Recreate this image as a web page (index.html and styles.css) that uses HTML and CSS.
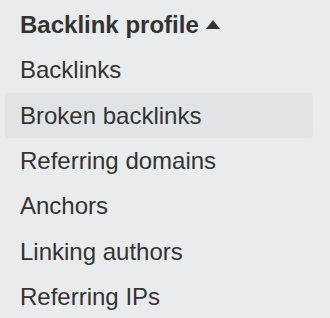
FILE: index.html
```html
<!DOCTYPE html>
<html>
<head>
<meta charset="utf-8">
<link rel="stylesheet" href="styles.css">
</head>
<body>
<nav class="menu">
  <div class="menu-title">Backlink profile<svg class="caret" width="14" height="9" viewBox="0 0 14 9"><path d="M7 0 L14 9 L0 9 Z" fill="#333"/></svg></div>
  <div class="menu-item">Backlinks</div>
  <div class="menu-item active">Broken backlinks</div>
  <div class="menu-item">Referring domains</div>
  <div class="menu-item">Anchors</div>
  <div class="menu-item">Linking authors</div>
  <div class="menu-item">Referring IPs</div>
</nav>
</body>
</html>
```

FILE: styles.css
```css
html, body {
  margin: 0;
  padding: 0;
  background: #eaebed;
}
.menu {
  width: 308px;
  margin-left: 5px;
  padding-top: 2px;
  font-family: "Liberation Sans", Arial, sans-serif;
  font-size: 24px;
  color: #333;
}
.menu-title {
  font-weight: bold;
  height: 45.33px;
  line-height: 45.33px;
  padding-left: 15px;
  white-space: nowrap;
}
.caret {
  display: inline-block;
  margin-left: 7px;
  vertical-align: 4px;
}
.menu-item {
  height: 45.33px;
  line-height: 45.33px;
  padding-left: 15px;
  border-radius: 4px;
  white-space: nowrap;
}
.menu-item.active {
  background: #e1e4e7;
}
```
